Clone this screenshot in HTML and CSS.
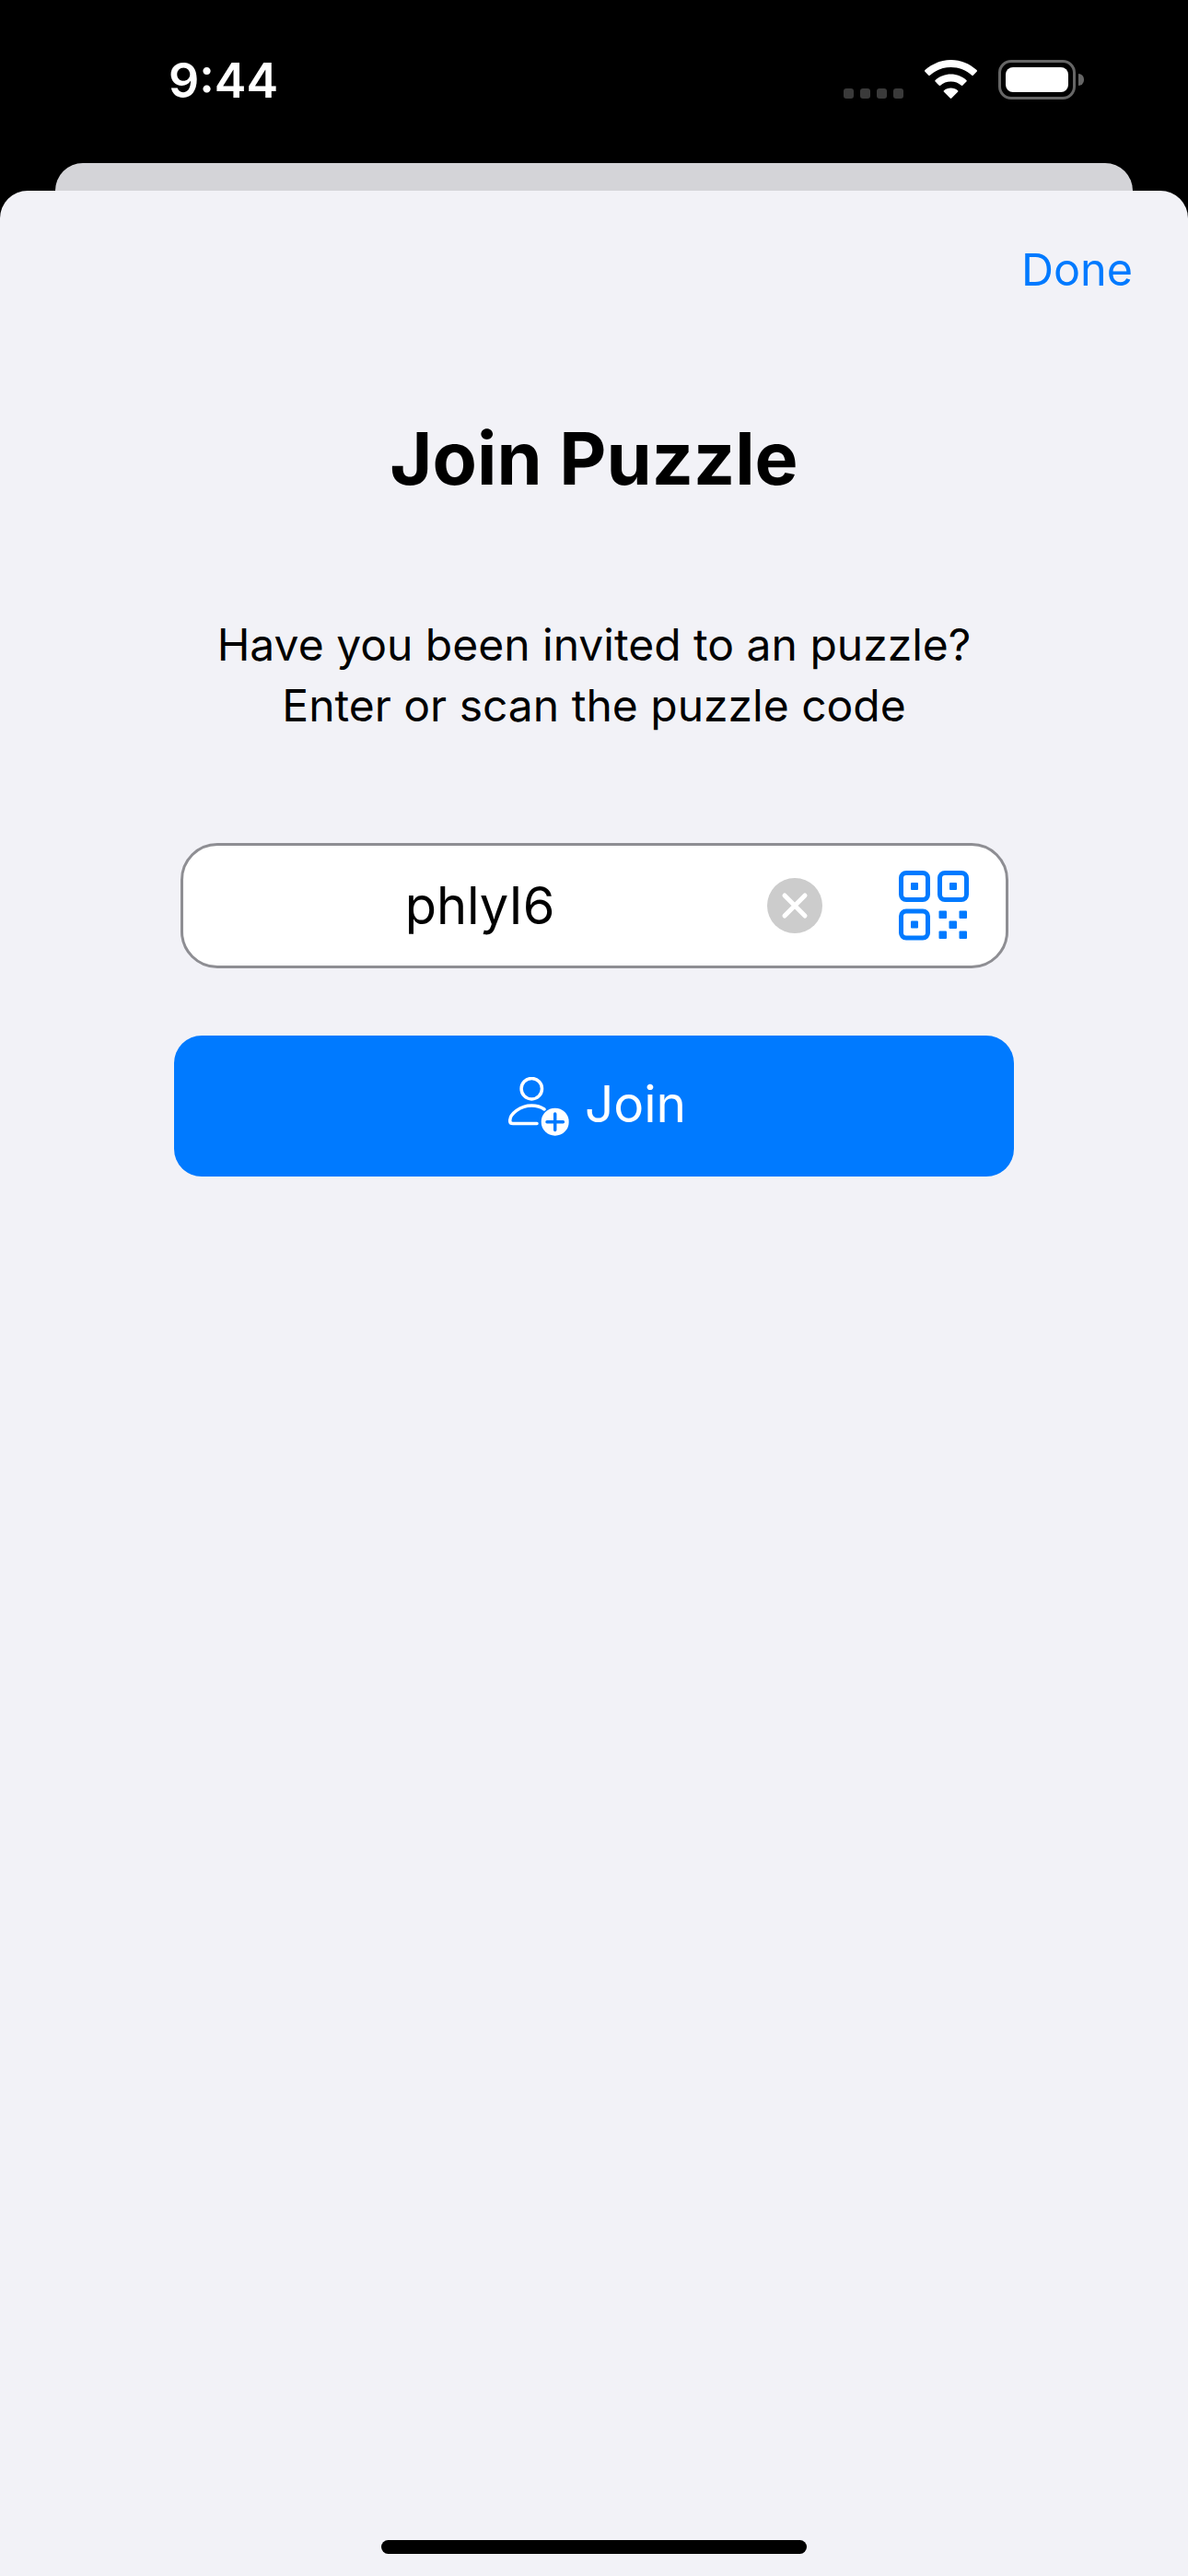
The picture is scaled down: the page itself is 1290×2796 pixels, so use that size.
FILE: index.html
```html
<!DOCTYPE html>
<html lang="en">
<head>
    <meta charset="UTF-8">
    <meta name="viewport" content="width=device-width, initial-scale=1.0">
    <title>Join Puzzle</title>
    <link rel="stylesheet" href="styles.css">
</head>
<body>

    <div class="status-bar">
        <div class="time">9:44</div>
        <div class="status-icons">
            <div class="signal">
                <span class="signal-dot"></span>
                <span class="signal-dot"></span>
                <span class="signal-dot"></span>
                <span class="signal-dot"></span>
            </div>
            <svg class="wifi" width="57" height="42" viewBox="0 0 57 42">
                <path fill="#fff" d="M28.500 0C17.600 0 7.900 4.300.4 11.100c-.5.500-.5 1.100 0 1.600l3.800 4c.4.500 1.100.500 1.600.1C11.800 11.300 19.800 8 28.500 8s16.700 3.300 22.700 8.800c.5.400 1.200.4 1.600-.1l3.800-4c.5-.5.5-1.100 0-1.600C49.100 4.300 39.400 0 28.500 0z"/>
                <path fill="#fff" d="M28.500 15.500c-6.500 0-12.400 2.500-16.900 6.500-.5.500-.5 1.100 0 1.600l3.900 4c.4.400 1.100.5 1.600.1 3-2.600 7-4.200 11.400-4.200s8.400 1.600 11.400 4.200c.5.400 1.200.3 1.600-.1l3.900-4c.5-.5.5-1.100 0-1.600-4.500-4-10.400-6.500-16.900-6.500z"/>
                <path fill="#fff" d="M28.500 30.500c-2.900 0-5.500 1-7.500 2.700-.5.400-.5 1.100 0 1.600l6.700 6.800c.5.500 1.100.5 1.600 0l6.700-6.800c.5-.5.5-1.200 0-1.600-2-1.700-4.600-2.700-7.500-2.700z"/>
            </svg>
            <div class="battery">
                <div class="battery-body">
                    <div class="battery-fill"></div>
                </div>
                <div class="battery-cap"></div>
            </div>
        </div>
    </div>

    <div class="back-card"></div>

    <div class="sheet">
        <div class="sheet-nav">
            <div class="done">Done</div>
        </div>

        <h1 class="title">Join Puzzle</h1>

        <p class="subtitle">Have you been invited to an puzzle?<br>Enter or scan the puzzle code</p>

        <div class="code-field">
            <div class="code-text">phlyI6</div>
            <svg class="clear-icon" width="60" height="60" viewBox="0 0 60 60">
                <circle cx="30" cy="30" r="30" fill="#ccc"/>
                <path d="M19 19l22 22M41 19L19 41" stroke="#fff" stroke-width="5" stroke-linecap="round" fill="none"/>
            </svg>
            <svg class="qr-icon" width="76" height="76" viewBox="0 0 76 76">
                <g fill="none" stroke="#007aff" stroke-width="5">
                    <rect x="2.500" y="2.500" width="29" height="29" rx="5.500"/>
                    <rect x="44.500" y="2.500" width="29" height="29" rx="5.500"/>
                    <rect x="2.500" y="44" width="29" height="29" rx="5.500"/>
                </g>
                <g fill="#007aff">
                    <rect x="13" y="13" width="8" height="8" rx="1"/>
                    <rect x="55" y="13" width="8" height="8" rx="1"/>
                    <rect x="13" y="54.500" width="8" height="8" rx="1"/>
                    <rect x="43.500" y="43.500" width="8.500" height="8.500" rx="1"/>
                    <rect x="65.500" y="43.500" width="8.500" height="8.500" rx="1"/>
                    <rect x="54.500" y="54.500" width="8.500" height="8.500" rx="1"/>
                    <rect x="43.500" y="65.500" width="8.500" height="8.500" rx="1"/>
                    <rect x="65.500" y="65.500" width="8.500" height="8.500" rx="1"/>
                </g>
            </svg>
        </div>

        <button class="join-button">
            <svg class="join-icon" width="66" height="64" viewBox="0 0 66 64">
                <circle cx="25.300" cy="12.700" r="11.200" fill="none" stroke="#fff" stroke-width="3.500"/>
                <path d="M39 35c-3.500-2.500-8.300-4-13.700-4C13 31 1.700 40 1.700 47.500c0 2 1.200 3 3.300 3H31" fill="none" stroke="#fff" stroke-width="3.500" stroke-linecap="round"/>
                <circle cx="50.700" cy="48.700" r="15" fill="#fff"/>
                <path d="M50.700 40v17.400M42 48.700h17.400" stroke="#007aff" stroke-width="3.500" stroke-linecap="round" fill="none"/>
            </svg>
            <span class="join-label">Join</span>
        </button>

        <div class="home-bar"></div>
    </div>

</body>
</html>
```

FILE: styles.css
```css
* {
    box-sizing: border-box;
}
body {
    margin: 0;
    width: 1290px;
    height: 2796px;
    display: flex;
    flex-direction: column;
    background-color: #000;
    font-family: 'Inter', 'Liberation Sans', sans-serif;
    overflow: hidden;
}
.status-bar {
    height: 177px;
    flex-shrink: 0;
    display: flex;
    justify-content: space-between;
    align-items: flex-start;
    padding: 58px 113px 0 183px;
}
.time {
    color: #fff;
    font-size: 52px;
    line-height: 60px;
    font-weight: 600;
}
.status-icons {
    display: flex;
    align-items: flex-start;
    padding-top: 7px;
}
.signal {
    display: flex;
    gap: 7px;
    margin-top: 31px;
    margin-right: 23px;
}
.signal-dot {
    width: 11px;
    height: 11px;
    border-radius: 3px;
    background-color: #3a3a3a;
}
.wifi {
    margin-right: 23px;
}
.battery {
    display: flex;
    align-items: center;
}
.battery-body {
    width: 84px;
    height: 43px;
    padding: 5px;
    border: 3px solid #666;
    border-radius: 14px;
}
.battery-fill {
    height: 100%;
    background-color: #fff;
    border-radius: 8px;
}
.battery-cap {
    width: 6px;
    height: 13px;
    margin-left: 3px;
    background-color: #666;
    border-radius: 0 6px 6px 0;
}
.back-card {
    height: 30px;
    flex-shrink: 0;
    margin: 0 60px;
    background-color: #d4d4d8;
    border-radius: 30px 30px 0 0;
}
.sheet {
    flex: 1;
    display: flex;
    flex-direction: column;
    align-items: center;
    background-color: #f2f2f7;
    border-radius: 30px 30px 0 0;
}
.sheet-nav {
    width: 100%;
    display: flex;
    justify-content: flex-end;
    padding: 55px 60px 0 0;
}
.done {
    color: #007aff;
    font-size: 48.500px;
    line-height: 62px;
}
.title {
    margin: 125px 0 0;
    font-size: 79px;
    line-height: 96px;
    font-weight: 700;
    color: #000;
}
.subtitle {
    margin: 122px 0 0;
    text-align: center;
    font-size: 48px;
    line-height: 66px;
    color: #000;
}
.code-field {
    width: 899px;
    height: 136px;
    margin-top: 116px;
    display: flex;
    align-items: center;
    background-color: #fff;
    border: 3px solid #8e8e93;
    border-radius: 40px;
}
.code-text {
    width: 645px;
    text-align: center;
    font-size: 56px;
    color: #000;
}
.clear-icon {
    margin-left: -11px;
}
.qr-icon {
    margin-left: 83px;
}
.join-button {
    width: 912px;
    height: 153px;
    margin-top: 73px;
    display: flex;
    justify-content: center;
    align-items: center;
    gap: 17px;
    padding: 0 0 0 7px;
    border: none;
    border-radius: 30px;
    background-color: #007aff;
    color: #fff;
    font-family: inherit;
    font-size: 55px;
}
.join-label {
    margin-bottom: 6px;
}
.home-bar {
    width: 462px;
    height: 15px;
    margin-top: auto;
    margin-bottom: 24px;
    background-color: #000;
    border-radius: 8px;
}
```
